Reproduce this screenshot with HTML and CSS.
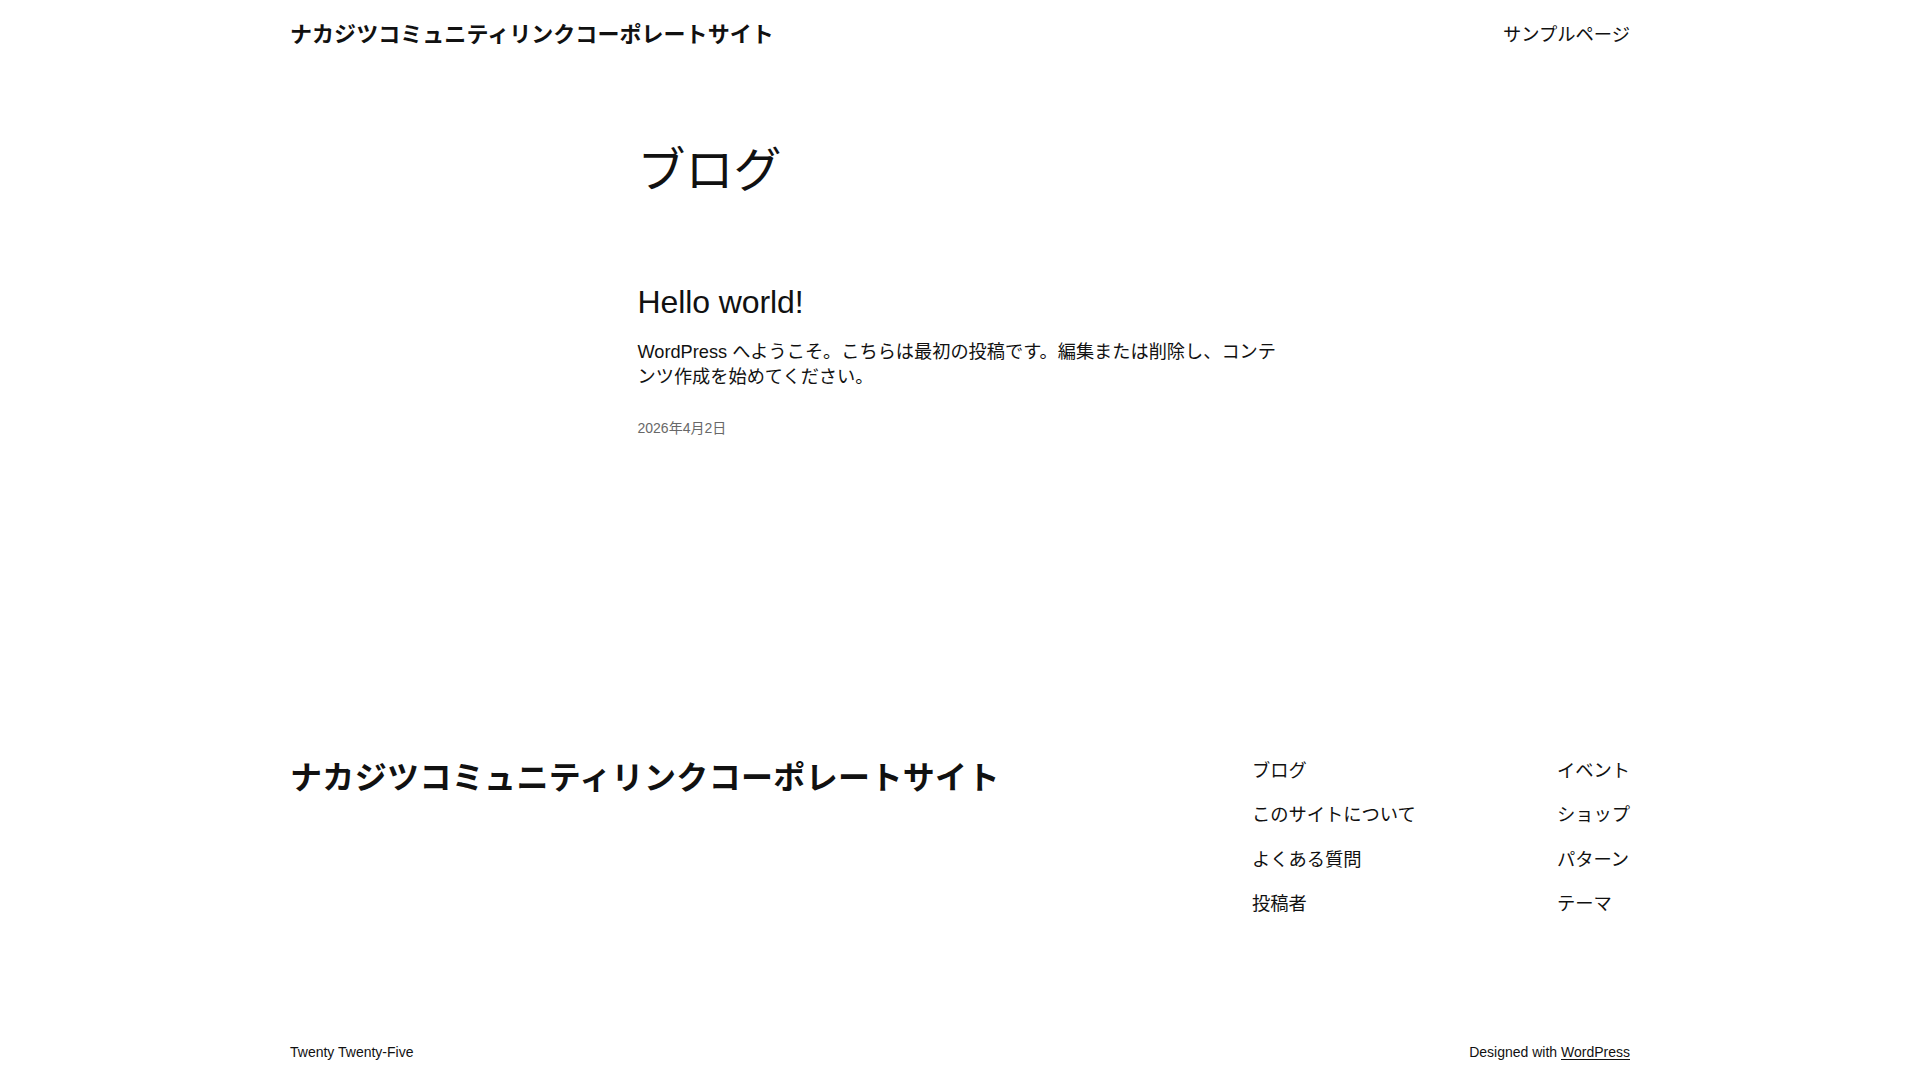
FILE: index.html
```html
<!DOCTYPE html>
<html lang="ja">
<head>
<meta charset="utf-8">
<title>ブログ – ナカジツコミュニティリンクコーポレートサイト</title>
<link rel="stylesheet" href="styles.css">
</head>
<body>
<header class="site-header">
  <a class="site-title" href="#">ナカジツコミュニティリンクコーポレートサイト</a>
  <nav class="header-nav"><a href="#">サンプルページ</a></nav>
</header>

<main class="main">
  <h1 class="page-title">ブログ</h1>
  <article class="post">
    <h2 class="post-title"><a href="#">Hello world!</a></h2>
    <p class="post-excerpt">WordPress へようこそ。こちらは最初の投稿です。編集または削除し、コンテンツ作成を始めてください。</p>
    <time class="post-date">2026年4月2日</time>
  </article>
</main>

<footer class="site-footer">
  <div class="footer-top">
    <a class="footer-title" href="#">ナカジツコミュニティリンクコーポレートサイト</a>
    <div class="footer-navs">
      <nav class="footer-col">
        <a href="#">ブログ</a>
        <a href="#">このサイトについて</a>
        <a href="#">よくある質問</a>
        <a href="#">投稿者</a>
      </nav>
      <nav class="footer-col">
        <a href="#">イベント</a>
        <a href="#">ショップ</a>
        <a href="#">パターン</a>
        <a href="#">テーマ</a>
      </nav>
    </div>
  </div>
  <div class="footer-bottom">
    <span>Twenty Twenty-Five</span>
    <span>Designed with <a class="wp-link" href="#">WordPress</a></span>
  </div>
</footer>
</body>
</html>
```

FILE: styles.css
```css
* { box-sizing: border-box; }

html, body {
  margin: 0;
  padding: 0;
  background: #ffffff;
}

body {
  font-family: "Liberation Sans", "Noto Sans CJK JP", sans-serif;
  color: #111111;
  font-size: 18px;
  line-height: 1.4;
}

a {
  color: inherit;
  text-decoration: none;
}

.site-header {
  width: 1340px;
  margin: 0 auto;
  padding: 21px 0 20px;
  display: flex;
  justify-content: space-between;
  align-items: center;
}

.site-title {
  font-size: 22px;
  font-weight: 700;
  line-height: 28px;
  letter-spacing: 0.05px;
}

.header-nav a {
  font-size: 18.3px;
  line-height: 28px;
}

.main {
  width: 645px;
  margin: 0 auto;
  padding-top: 74.5px;
}

.page-title {
  margin: 0;
  font-size: 48px;
  font-weight: 400;
  line-height: 54px;
}

.post {
  margin-top: 85.5px;
  display: flex;
  flex-direction: column;
}

.post-title {
  margin: 0;
  font-size: 32px;
  font-weight: 400;
  line-height: 38px;
  letter-spacing: -0.1px;
}

.post-excerpt {
  margin: 18.5px 0 0;
  font-size: 18.2px;
  line-height: 25.2px;
}

.post-date {
  margin-top: 28.5px;
  font-size: 14px;
  line-height: 20px;
  color: #686868;
}

.site-footer {
  width: 1340px;
  margin: 320.7px auto 0;
}

.footer-top {
  display: flex;
  justify-content: space-between;
  align-items: flex-start;
}

.footer-title {
  font-size: 32px;
  font-weight: 700;
  line-height: 38px;
  letter-spacing: 0.35px;
}

.footer-navs {
  display: flex;
  gap: 141px;
}

.footer-col {
  display: flex;
  flex-direction: column;
  gap: 21.4px;
}

.footer-col a {
  font-size: 18.3px;
  line-height: 23px;
}

.footer-bottom {
  margin-top: 127.2px;
  padding-bottom: 20px;
  display: flex;
  justify-content: space-between;
  font-size: 14px;
  line-height: 20px;
}

.wp-link {
  text-decoration: underline;
  text-underline-offset: 2px;
}
```
